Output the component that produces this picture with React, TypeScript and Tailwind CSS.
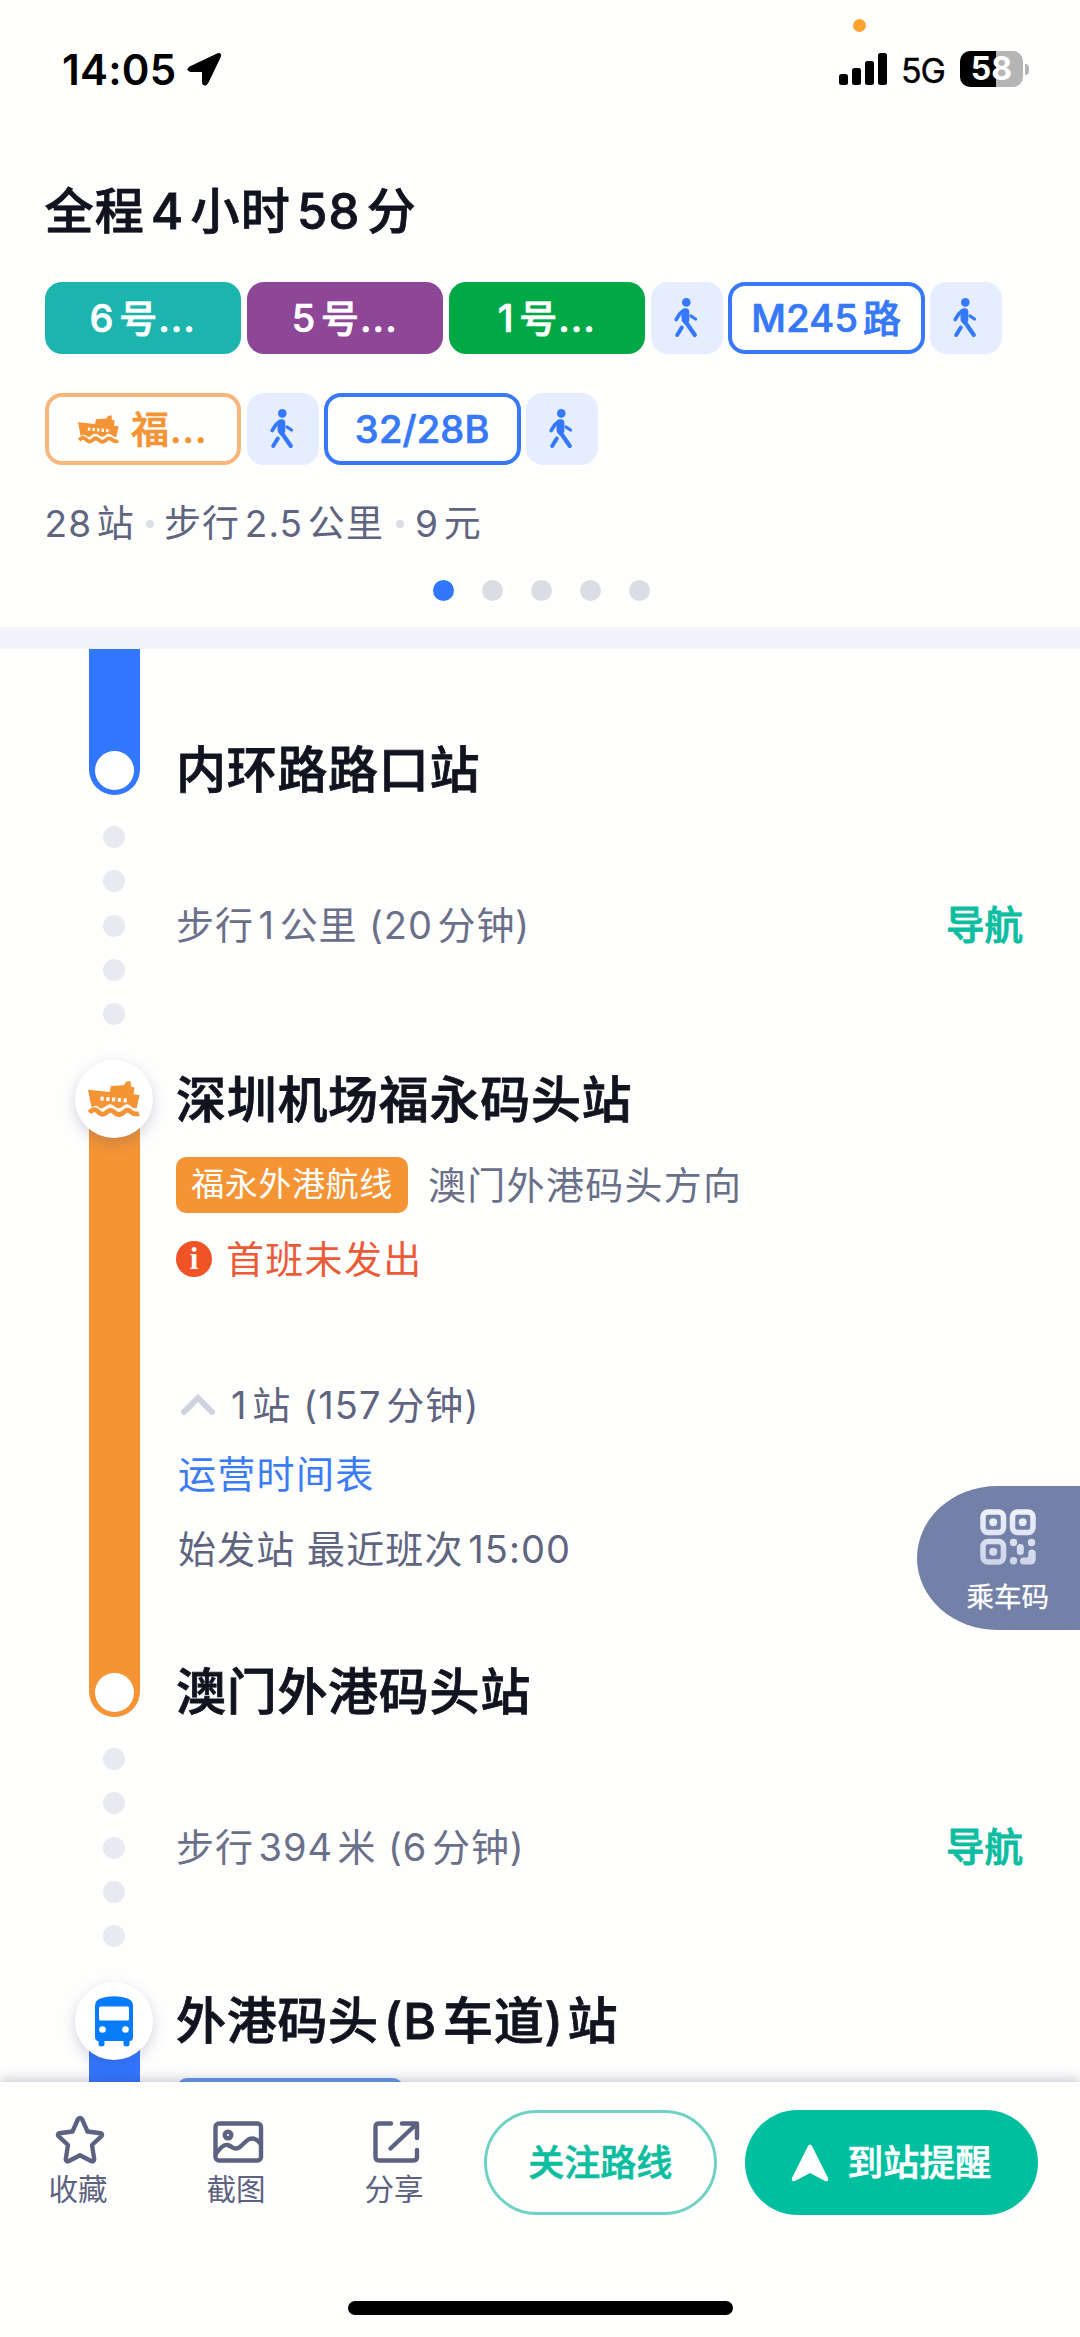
import React from 'react';

const font = "font-['Inter','Noto_Sans_CJK_SC',sans-serif]";

function FerryIcon({ className }: { className: string }) {
  return (
    <svg className={className} viewBox="0 0 52 36" fill="none">
      <path
        d="M0 8.800 L21.500 11 L23 5 L36 4.200 L38 .8 L42.500 0 L43 5.500 L46.500 6.500 L45.500 13.200 L51.600 14 L48.500 27.500 Q45 27.500 42.500 25 Q39 21.500 35 25 Q31 29.500 26 25 Q22 21.500 18 25 Q13 29.500 10 25.500 Q7.500 23.500 3.500 26.500 Z"
        fill="#f49434"
      />
      <path d="M12.500 17.500 L39 19.500" stroke="#fff" strokeWidth="4" strokeDasharray="3.200 2.600" />
      <path
        d="M1.500 31.500 Q6 26.500 9.500 30 Q14 36 19 31 Q22.500 27.500 26 31 Q31 36 36 31 Q40 27.500 43 31 Q46.500 34 51 32.500"
        stroke="#f49434"
        strokeWidth="4.800"
      />
    </svg>
  );
}

function WalkIcon() {
  return (
    <svg className="mr-[2px] h-[40px] w-[24px]" viewBox="0 0 24 40" fill="none" stroke="#3478fb" strokeLinecap="round" strokeLinejoin="round">
      <circle cx="12.300" cy="4.400" r="4.300" fill="#3478fb" stroke="none" />
      <path d="M8.500 13 L11.500 11.500 Q14 11 14 14 L14 22.500 L11.500 25.500 L9 22.500 Z" fill="#3478fb" strokeWidth="2.600" />
      <path d="M9.500 12.500 L6 15.500 L2.200 21.500" strokeWidth="3.600" />
      <path d="M11.500 23.500 L20.800 37" strokeWidth="4.200" />
      <path d="M7.800 29.500 L3.200 37" strokeWidth="4" />
      <path d="M17 18 L21.500 21" strokeWidth="3.300" />
    </svg>
  );
}

function BusIcon() {
  return (
    <svg className="h-[51px] w-[40px]" viewBox="0 0 40 51">
      <path
        d="M1 10 Q1 4 7 2.200 Q20 -1.500 33 2.200 Q39 4 39 10 V41 Q39 45 35.500 45 V48 Q35.500 50.500 32.500 50.500 Q29.500 50.500 29.500 48 V45 H10.500 V48 Q10.500 50.500 7.500 50.500 Q4.500 50.500 4.500 48 V45 Q1 45 1 41 Z"
        fill="#067cfb"
      />
      <rect x="5" y="10.500" width="30" height="14" rx="1.500" fill="#fff" />
      <circle cx="8.500" cy="33.500" r="3.300" fill="#fff" />
      <circle cx="31.500" cy="33.500" r="3.300" fill="#fff" />
    </svg>
  );
}

function QrIcon() {
  return (
    <svg className="h-[56px] w-[56px]" viewBox="0 0 56 56" fill="none">
      <defs>
        <linearGradient id="qr" x1="0" y1="0" x2="0" y2="56" gradientUnits="userSpaceOnUse">
          <stop offset="0" stopColor="#f0f2fa" />
          <stop offset="1" stopColor="#cdd4ea" />
        </linearGradient>
      </defs>
      <g stroke="url(#qr)" strokeWidth="5.500">
        <rect x="3" y="3" width="20.500" height="20.500" rx="5" />
        <rect x="32.500" y="3" width="20.500" height="20.500" rx="5" />
        <rect x="3" y="32.500" width="20.500" height="20.500" rx="5" />
      </g>
      <g fill="url(#qr)">
        <circle cx="13.200" cy="13.200" r="4" />
        <circle cx="42.700" cy="13.200" r="4" />
        <circle cx="13.200" cy="42.700" r="4" />
        <circle cx="33.500" cy="33.500" r="3.700" />
        <circle cx="51.500" cy="33.500" r="3.700" />
        <circle cx="33.500" cy="51.700" r="3.700" />
        <rect x="36.800" y="35" width="7" height="11" rx="3.500" />
        <path d="M52 40.500 Q55.700 40.500 55.700 44 V50 Q55.700 55.500 50 55.500 H43.500 Q40 55.500 40 52 Q40 48.500 43.500 48.500 H46.500 Q48.300 48.500 48.300 46.500 V44 Q48.300 40.500 52 40.500 Z" />
      </g>
    </svg>
  );
}

function StatusBar() {
  return (
    <div className="flex h-[138px] items-start justify-between pl-[62px] pr-[51px] text-black">
      <div className="flex h-[138px] items-center">
        <span className="text-[42px] font-semibold tracking-[0.200px]">14:05</span>
        <svg className="ml-[11px] h-[34px] w-[35px]" viewBox="0 0 35 34">
          <path
            d="M2.200 15.200 L30.500 1.800 Q34.500 .5 33.500 4.500 L20.500 31.500 Q18.800 34 16.500 32.800 Q15.500 32 15.500 30.500 V19.500 H3.500 Q-1 18.500 2.200 15.200 Z"
            fill="#000"
            stroke="#000"
            strokeWidth="1"
          />
        </svg>
      </div>
      <div className="relative flex h-[138px] items-center">
        <span className="absolute left-[14px] top-[19px] h-[13px] w-[13px] rounded-full bg-[#fda32f]" />
        <div className="flex items-end gap-[4.400px]">
          <span className="h-[11px] w-[8.700px] rounded-[2.500px] bg-black" />
          <span className="h-[17px] w-[8.700px] rounded-[2.500px] bg-black" />
          <span className="h-[24px] w-[8.700px] rounded-[2.500px] bg-black" />
          <span className="h-[32px] w-[8.700px] rounded-[2.500px] bg-black" />
        </div>
        <span className="ml-[14px] mt-[2px] text-[34px] tracking-[-1px] [-webkit-text-stroke:0.4px]">5G</span>
        <div className="ml-[15px] flex h-[36px] w-[63px] items-center justify-center rounded-[10px] bg-[linear-gradient(90deg,#000_57%,#b5b5b6_57%)] text-[32px] font-bold text-white">
          58
        </div>
        <span className="ml-[2px] h-[11px] w-[4px] rounded-r-full bg-[#b5b5b6]" />
      </div>
    </div>
  );
}

function LineChip({ className, children }: { className: string; children: React.ReactNode }) {
  return (
    <div
      className={`flex h-[72px] w-[196.500px] items-center justify-center rounded-[17px] text-[38px] font-medium [-webkit-text-stroke:0.7px] [text-autospace:normal] ${className}`}
    >
      {children}
    </div>
  );
}

function WalkChip() {
  return (
    <div className="flex h-[72px] w-[72px] items-center justify-center rounded-[17px] bg-[#e6edfe]">
      <WalkIcon />
    </div>
  );
}

function Summary() {
  return (
    <header className="h-[489px] pl-[44.500px]">
      <h1 className="flex h-[144px] items-center pt-[3px] text-[49px] font-medium tracking-[1.200px] text-[#11131f] [-webkit-text-stroke:0.8px] [text-autospace:normal]">
        全程4小时58分
      </h1>
      <div className="flex gap-[5.500px]">
        <LineChip className="bg-[#1bb5ad] tracking-[1px] text-white">6号...</LineChip>
        <LineChip className="bg-[#8e4696] tracking-[1px] text-white">5号...</LineChip>
        <LineChip className="bg-[#00a945] tracking-[1px] text-white">1号...</LineChip>
        <WalkChip />
        <LineChip className="border-4 border-[#3678f6] tracking-[0.300px] text-[#3678f6]">M245路</LineChip>
        <WalkChip />
      </div>
      <div className="mt-[39px] flex gap-[5.500px]">
        <LineChip className="border-4 border-[#f8b67c] tracking-[1px] text-[#f49434]">
          <FerryIcon className="mr-[12px] h-[29px] w-[41px]" />
          福...
        </LineChip>
        <WalkChip />
        <LineChip className="border-4 border-[#3678f6] tracking-[0.200px] text-[#3678f6]">32/28B</LineChip>
        <WalkChip />
      </div>
      <div className="mt-[34px] flex h-[50px] items-center text-[37px] tracking-[1.100px] text-[#5f6580] [text-autospace:normal]">
        <span>28站</span>
        <span className="ml-[11px] mr-[10px] h-[8px] w-[8px] rounded-full bg-[#dcdee6]" />
        <span>步行2.5公里</span>
        <span className="ml-[12px] mr-[11px] h-[8px] w-[8px] rounded-full bg-[#dcdee6]" />
        <span>9元</span>
      </div>
      <div className="mt-[31px] ml-[388px] flex gap-[28px]">
        <span className="h-[21px] w-[21px] rounded-full bg-[#3277ff]" />
        <span className="h-[21px] w-[21px] rounded-full bg-[#dcdde3]" />
        <span className="h-[21px] w-[21px] rounded-full bg-[#dcdde3]" />
        <span className="h-[21px] w-[21px] rounded-full bg-[#dcdde3]" />
        <span className="h-[21px] w-[21px] rounded-full bg-[#dcdde3]" />
      </div>
    </header>
  );
}

function StopName({ children }: { children: React.ReactNode }) {
  return (
    <h2 className="-ml-px flex h-[50px] items-center whitespace-nowrap text-[50px] font-medium tracking-[0.700px] text-[#11131f] [-webkit-text-stroke:0.8px] [text-autospace:normal]">
      {children}
    </h2>
  );
}

function WalkStep({ children }: { children: React.ReactNode }) {
  return (
    <div className="flex h-[265px] shrink-0">
      <div className="flex w-[78px] flex-col items-center gap-[22.300px] pt-[31px]">
        {[0, 1, 2, 3, 4].map((n) => (
          <span key={n} className="h-[22px] w-[22px] shrink-0 rounded-full bg-[#e9eaf1]" />
        ))}
      </div>
      <div className="ml-[23px] flex h-[261px] flex-1 items-center justify-between pr-[57px]">
        <span className="text-[38px] tracking-[0.900px] text-[#6a708a] [text-autospace:normal]">{children}</span>
        <span className="text-[38.500px] font-medium text-[#0cbd9f] [-webkit-text-stroke:0.8px]">导航</span>
      </div>
    </div>
  );
}

function RailEnd() {
  return <span className="mb-[5.500px] h-[39px] w-[39px] rounded-full bg-white" />;
}

function RailIcon({ children }: { children: React.ReactNode }) {
  return (
    <div className="z-10 flex h-[78px] w-[78px] shrink-0 items-center justify-center rounded-full bg-white shadow-[0_5px_14px_rgba(60,70,130,0.22)]">
      {children}
    </div>
  );
}

function Route() {
  return (
    <main className="flex h-[1433px] flex-col overflow-hidden pl-[75px]">
      <div className="flex h-[146px] shrink-0">
        <div className="flex w-[78px] justify-center">
          <div className="flex w-[51px] items-end justify-center rounded-b-full bg-[#3277ff]">
            <RailEnd />
          </div>
        </div>
        <div className="ml-[24px] flex items-end">
          <StopName>内环路路口站</StopName>
        </div>
      </div>

      <WalkStep>步行1公里 (20分钟)</WalkStep>

      <div className="flex h-[657px] shrink-0">
        <div className="flex w-[78px] flex-col items-center">
          <RailIcon>
            <FerryIcon className="h-[36px] w-[52px]" />
          </RailIcon>
          <div className="-mt-[39px] flex w-[51px] flex-1 items-end justify-center rounded-b-full bg-[#f49434]">
            <RailEnd />
          </div>
        </div>
        <div className="ml-[24px] flex flex-1 flex-col pt-[15px] text-[38px] tracking-[1.100px] text-[#5f6580] [text-autospace:normal]">
          <StopName>深圳机场福永码头站</StopName>
          <div className="-ml-[1px] mt-[32px] flex h-[56px] items-center">
            <span className="flex h-[56px] w-[232px] items-center justify-center rounded-[10px] bg-[#f49434] text-[33px] tracking-[0.600px] text-white">
              福永外港航线
            </span>
            <span className="ml-[20px] tracking-[1.300px] text-[#6a708a]">澳门外港码头方向</span>
          </div>
          <div className="-ml-[1px] mt-[21px] flex h-[50px] items-center text-[#ec5b38]">
            <span className="flex h-[36px] w-[36px] items-center justify-center rounded-full bg-[#f05326] pl-[1px] font-['Liberation_Serif',serif] text-[31px] font-bold text-white">
              i
            </span>
            <span className="ml-[14px] tracking-[1.300px]">首班未发出</span>
          </div>
          <div className="mt-[96px] flex h-[50px] items-center pl-[3px]">
            <svg className="mr-[15px] h-[22px] w-[36px]" viewBox="0 0 36 22" fill="none">
              <path d="M4 18 L18 4 L32 18" stroke="#d0d3de" strokeWidth="6" strokeLinecap="round" />
            </svg>
            1站 (157分钟)
          </div>
          <div className="mt-[19px] flex h-[50px] items-center pl-px tracking-[1.300px] text-[#3b7cf5]">运营时间表</div>
          <div className="mt-[25px] flex h-[50px] items-center pl-px">始发站 最近班次15:00</div>
          <div className="mt-[93px]">
            <StopName>澳门外港码头站</StopName>
          </div>
        </div>
      </div>

      <WalkStep>步行394米 (6分钟)</WalkStep>

      <div className="flex h-[150px] shrink-0">
        <div className="flex w-[78px] flex-col items-center">
          <RailIcon>
            <BusIcon />
          </RailIcon>
          <div className="-mt-[39px] w-[51px] flex-1 bg-[#3277ff]" />
        </div>
        <div className="ml-[24px] pt-[14px]">
          <StopName>
            外港码头<span className="ml-[5px] mr-[4px]">(B车道)</span>站
          </StopName>
          <div className="mt-[32px] h-[56px] w-[226px] rounded-[10px] bg-[#6b97ee]" />
        </div>
      </div>
    </main>
  );
}

function PassButton() {
  return (
    <button className="absolute right-0 top-[1486px] flex h-[144px] w-[163.500px] flex-col items-center rounded-l-[80px_72px] bg-[#7380a8] pl-[19px] pt-[23px] text-white">
      <QrIcon />
      <span className="mt-[12px] text-[27.500px] leading-[40px] [-webkit-text-stroke:0.3px]">乘车码</span>
    </button>
  );
}

function Action({ label, children }: { label: string; children: React.ReactNode }) {
  return (
    <div className="flex w-[158px] flex-col items-center">
      <svg className="ml-1 h-[56px] w-[56px]" viewBox="0 0 56 56" fill="none" stroke="#5c6280" strokeWidth="4.400" strokeLinecap="round" strokeLinejoin="round">
        {children}
      </svg>
      <span className="mt-px text-[29.500px] leading-[40px] text-[#5c6280]">{label}</span>
    </div>
  );
}

function BottomBar() {
  return (
    <footer className="relative z-20 h-[255px] bg-[#fefefd] shadow-[0_-2px_12px_rgba(40,50,80,0.28)]">
      <div className="flex pt-[28px]">
        <div className="-ml-[1px] flex pt-[2px]">
          <Action label="收藏">
            <path d="M28 6 Q29.500 6 30.200 7.500 L35.500 19.500 L48.500 21.200 Q51 22 49.500 24.200 L40 33 L42.200 47 Q42.200 50.200 39.500 49.200 L28 43.300 L16.500 49.200 Q13.800 50.200 13.800 47 L16 33 L6.500 24.200 Q5 22 7.500 21.200 L20.500 19.500 L25.800 7.500 Q26.500 6 28 6 Z" />
          </Action>
          <Action label="截图">
            <rect x="5.500" y="11.500" width="45.500" height="37" rx="3.500" />
            <circle cx="18" cy="23" r="3.300" />
            <path d="M6.500 41 Q13 32 17.500 33 Q20 33.500 22.500 35.500 Q26 38 30.500 34.500 L37 28.500 Q44 23.500 50.500 31.500" />
          </Action>
          <Action label="分享">
            <path d="M23 11.500 H11 Q7.500 11.500 7.500 15 V45 Q7.500 48.500 11 48.500 H45.500 Q49 48.500 49 45 V38" />
            <path d="M34 11.500 H49 V26 M48.500 12 L22.500 36.500" />
          </Action>
        </div>
        <button className="ml-[11px] flex h-[105px] w-[232.500px] items-center justify-center rounded-full border-[3px] border-[#70d2c4] text-[36px] font-medium text-[#0cbd9f] [-webkit-text-stroke:0.6px]">
          关注路线
        </button>
        <button className="ml-[28px] flex h-[105px] w-[293.500px] items-center justify-center rounded-full bg-[#00bf9f] text-[36px] font-medium text-white [-webkit-text-stroke:0.6px]">
          <svg className="mr-[18px] h-[38px] w-[38px]" viewBox="0 0 38 38">
            <path d="M17 2 Q19 -1 21 2 L37 34 Q38 38 34 37 L19 29 L4 37 Q0 38 1 34 Z" fill="#fff" />
          </svg>
          到站提醒
        </button>
      </div>
      <div className="mx-auto mt-[86px] h-[14px] w-[385px] rounded-full bg-black" />
    </footer>
  );
}

export default function App() {
  return (
    <div className={`relative h-[2337px] w-[1080px] overflow-hidden bg-[#fefefd] ${font}`}>
      <StatusBar />
      <Summary />
      <div className="h-[22px] bg-[#f3f4f9]" />
      <Route />
      <BottomBar />
      <PassButton />
    </div>
  );
}
